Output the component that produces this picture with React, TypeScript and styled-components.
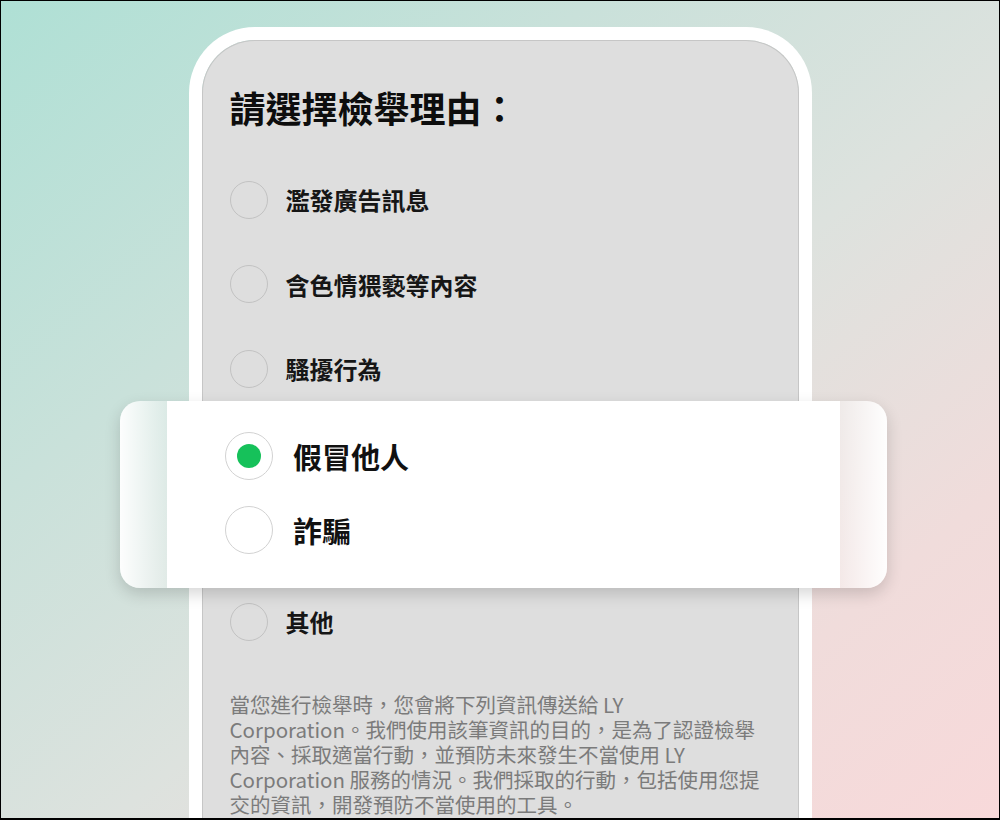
import React from 'react'
import styled, { createGlobalStyle } from 'styled-components'

const reasons = ['濫發廣告訊息', '含色情猥褻等內容', '騷擾行為']
const focused = ['假冒他人', '詐騙']

const App: React.FC = () => {
  return (
    <>
      <GlobalStyle />
      <Stage lang="zh-Hant-TW">
        <Phone>
          <Screen>
            <Title>請選擇檢舉理由：</Title>
            <List>
              {reasons.map((r) => (
                <Row key={r}>
                  <Radio />
                  <Label>{r}</Label>
                </Row>
              ))}
              {/* rows 4-5 sit under the zoomed card */}
              <Covered />
              <Row>
                <Radio />
                <Label>其他</Label>
              </Row>
            </List>
            <Notice>
              當您進行檢舉時，您會將下列資訊傳送給 LY
              <br />
              Corporation。我們使用該筆資訊的目的，是為了認證檢舉
              <br />
              內容、採取適當行動，並預防未來發生不當使用 LY
              <br />
              Corporation 服務的情況。我們採取的行動，包括使用您提
              <br />
              交的資訊，開發預防不當使用的工具。
            </Notice>
          </Screen>
        </Phone>

        <Zoomed>
          <Fade $side="left" />
          <CardBody>
            {focused.map((r, i) => (
              <BigRow key={r}>
                <BigRadio>{i === 0 && <Dot />}</BigRadio>
                <BigLabel>{r}</BigLabel>
              </BigRow>
            ))}
          </CardBody>
          <Fade $side="right" />
        </Zoomed>
      </Stage>
    </>
  )
}

export default App

const GlobalStyle = createGlobalStyle`
  body {
    margin: 0;
    font-family: "Noto Sans CJK TC", "Noto Sans", sans-serif;
  }
`

const Stage = styled.div`
  position: relative;
  width: 1000px;
  height: 820px;
  box-sizing: border-box;
  border: 1px solid #000;
  border-bottom-width: 2px;
  overflow: hidden;
  padding-top: 26px;
  font-family: "Noto Sans CJK TC", sans-serif;
  font-feature-settings: "locl" 1;
  background: linear-gradient(140deg, #afe0d5 0%, #c9e1da 30%, #dde2de 55%, #f0dcdb 80%, #f8d9da 100%);
`

const Phone = styled.div`
  width: 623px;
  height: 900px;
  margin: 0 auto;
  box-sizing: border-box;
  border: 13px solid #fff;
  border-bottom: none;
  border-radius: 66px 66px 0 0;
`

const Screen = styled.div`
  height: 100%;
  box-sizing: border-box;
  border: 1px solid #c6c6c6;
  border-bottom: none;
  border-radius: 53px 53px 0 0;
  background: #dedede;
  padding: 44px 27px 0 27px;
`

const Title = styled.h1`
  margin: 0;
  font-size: 36px;
  line-height: 44px;
  font-weight: 700;
  color: #0d0d0d;
`

const List = styled.div`
  margin-top: 28.8px;
  display: flex;
  flex-direction: column;
`

const Row = styled.div`
  height: 84.4px;
  display: flex;
  align-items: center;
  gap: 18px;
`

const Covered = styled.div`
  height: 168.8px;
`

const Radio = styled.span`
  width: 38px;
  height: 38px;
  box-sizing: border-box;
  border-radius: 50%;
  border: 1.5px solid #c2c2c2;
  flex-shrink: 0;
`

const Label = styled.span`
  font-size: 24px;
  font-weight: 700;
  color: #161616;
`

const Notice = styled.p`
  margin: 28px 0 0;
  font-size: 20.5px;
  line-height: 25px;
  color: #7b7b7b;
  white-space: nowrap;
`

const Zoomed = styled.div`
  position: absolute;
  left: 119px;
  top: 400px;
  width: 767px;
  height: 187px;
  border-radius: 20px;
  overflow: hidden;
  display: flex;
  box-shadow: 0 6px 16px rgba(0, 0, 0, 0.16);
`

const Fade = styled.div<{ $side: 'left' | 'right' }>`
  width: 47px;
  flex-shrink: 0;
  background: ${(p) =>
    p.$side === 'left'
      ? 'linear-gradient(to right, rgba(255,255,255,0.96), rgba(255,255,255,0.3))'
      : 'linear-gradient(to right, rgba(255,255,255,0.35), rgba(255,255,255,0.97))'};
`

const CardBody = styled.div`
  flex: 1;
  background: #fff;
  padding: 18px 0 21px 58px;
  display: flex;
  flex-direction: column;
`

const BigRow = styled.div`
  height: 74px;
  display: flex;
  align-items: center;
  gap: 20px;
`

const BigRadio = styled.span`
  width: 48px;
  height: 48px;
  box-sizing: border-box;
  border-radius: 50%;
  border: 1.5px solid #d2d2d2;
  background: #fff;
  display: flex;
  align-items: center;
  justify-content: center;
  flex-shrink: 0;
`

const Dot = styled.span`
  width: 24px;
  height: 24px;
  border-radius: 50%;
  background: #16c15a;
`

const BigLabel = styled.span`
  font-size: 29px;
  font-weight: 700;
  color: #111;
`
